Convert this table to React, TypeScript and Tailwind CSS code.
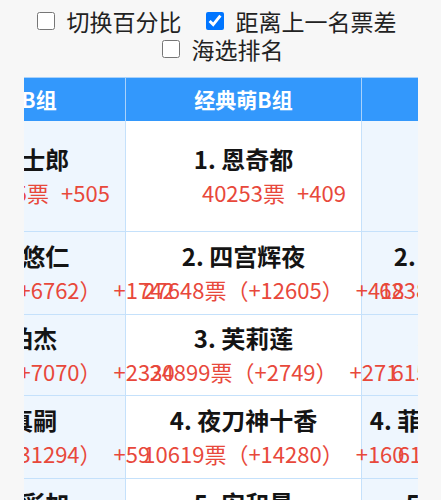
import React from "react";

type Entry = { rank: number; name: string; votes: number; diff?: number; inc: number };

const cols: { title: string; entries: Entry[] }[] = [
  {
    title: "新人萌B组",
    entries: [
      { rank: 1, name: "卫宫士郎", votes: 53245, inc: 505 },
      { rank: 2, name: "虎杖悠仁", votes: 46483, diff: 6762, inc: 1742 },
      { rank: 3, name: "罗柏杰", votes: 39413, diff: 7070, inc: 2330 },
      { rank: 4, name: "碇真嗣", votes: 8119, diff: 31294, inc: 59 },
      { rank: 5, name: "户塚彩加", votes: 6021, diff: 2098, inc: 37 },
    ],
  },
  {
    title: "经典萌B组",
    entries: [
      { rank: 1, name: "恩奇都", votes: 40253, inc: 409 },
      { rank: 2, name: "四宫辉夜", votes: 27648, diff: 12605, inc: 418 },
      { rank: 3, name: "芙莉莲", votes: 24899, diff: 2749, inc: 271 },
      { rank: 4, name: "夜刀神十香", votes: 10619, diff: 14280, inc: 160 },
      { rank: 5, name: "安和昴", votes: 9120, diff: 1499, inc: 88 },
    ],
  },
  {
    title: "经典萌C组",
    entries: [
      { rank: 1, name: "阿库娅", votes: 73104, inc: 612 },
      { rank: 2, name: "珂朵莉·诺塔", votes: 62382, diff: 10722, inc: 344 },
      { rank: 3, name: "御坂美琴", votes: 61527, diff: 855, inc: 290 },
      { rank: 4, name: "菲特·泰斯特罗莎", votes: 61465, diff: 62, inc: 133 },
      { rank: 5, name: "雪之下雪乃", votes: 41002, diff: 20463, inc: 95 },
    ],
  },
];

const rowHeights = ["h-[111px]", "h-[83px]", "h-[81px]", "h-[83px]", "h-[83px]"];

function Cell({ e, col, row }: { e: Entry; col: number; row: number }) {
  const bg = col === 1 ? "bg-white" : "bg-[#eef6fe]";
  return (
    <div
      className={`${bg} ${rowHeights[row]} box-border border-r border-b border-[#c5e1fb] flex flex-col justify-center items-center`}
    >
      <div className="whitespace-nowrap text-[24px] leading-[32px] font-bold text-[#141414]">
        {e.rank}. {e.name}
      </div>
      <div className="flex justify-center w-full">
        <span className="relative whitespace-nowrap text-[22px] leading-[34px] text-[#e8483b]">
          {e.votes}票{e.diff !== undefined ? `（+${e.diff}）` : ""}
          <span className="absolute left-full top-0 ml-[12px] whitespace-nowrap">+{e.inc}</span>
        </span>
      </div>
    </div>
  );
}

export default function App() {
  return (
    <div className="min-h-[500px] bg-[#f7f7f7] pt-[7px] font-['Noto_Sans_CJK_SC',sans-serif] text-[#222]">
      <div className="flex justify-center items-center gap-[24px] h-[28px] text-[23px] leading-[28px] pr-[8px]">
        <label className="flex items-center">
          <input type="checkbox" className="w-[18px] h-[18px] m-0 mr-[12px]" />
          切换百分比
        </label>
        <label className="flex items-center">
          <input type="checkbox" defaultChecked className="w-[18px] h-[18px] m-0 mr-[12px]" />
          距离上一名票差
        </label>
      </div>
      <div className="flex justify-center items-center h-[28px] text-[23px] leading-[28px] pl-[4px]">
        <label className="flex items-center">
          <input type="checkbox" className="w-[18px] h-[18px] m-0 mr-[12px]" />
          海选排名
        </label>
      </div>
      <div className="mt-[14px] ml-[24px] w-[394px] overflow-hidden">
        <div className="grid grid-cols-[236px_236px_236px] w-max -ml-[134px]">
          {cols.map((c, i) => (
            <div
              key={"h" + i}
              className="h-[44px] box-border bg-[#3398fc] border-t border-r border-[#a9d2fb] flex items-center justify-center text-white font-bold text-[21px] whitespace-nowrap"
            >
              {c.title}
            </div>
          ))}
          {[0, 1, 2, 3, 4].map((r) =>
            cols.map((c, i) => <Cell key={r + "-" + i} e={c.entries[r]} col={i} row={r} />)
          )}
        </div>
      </div>
    </div>
  );
}
